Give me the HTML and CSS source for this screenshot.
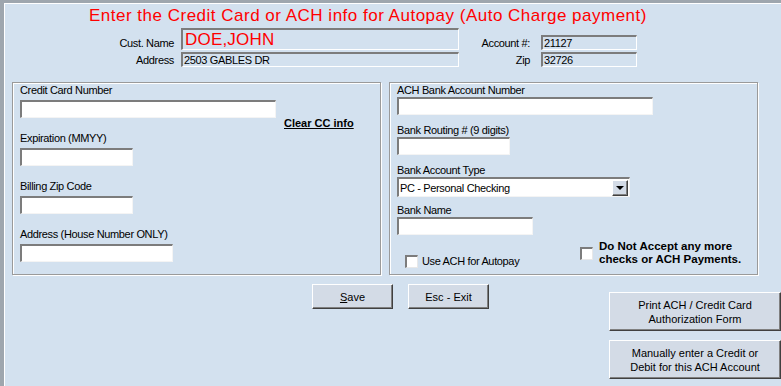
FILE: index.html
```html
<!DOCTYPE html>
<html lang="en">
<head>
    <meta charset="UTF-8">
    <title>Autopay Setup</title>
    <link rel="stylesheet" href="styles.css">
</head>
<body>
    <div class="window">
        <div class="face">
            <h1 class="title">Enter the Credit Card or ACH info for Autopay (Auto Charge payment)</h1>

            <!-- Customer info (read only) -->
            <div class="cust">
                <span class="cust-label">Cust. Name</span>
                <div class="ro ro-name">DOE,JOHN</div>
                <span class="cust-label acct-label">Account #:</span>
                <div class="ro ro-acct">21127</div>
                <span class="cust-label">Address</span>
                <div class="ro">2503 GABLES DR</div>
                <span class="cust-label acct-label">Zip</span>
                <div class="ro">32726</div>
            </div>

            <div class="groups">
                <!-- Credit card -->
                <div class="group group-cc">
                    <div class="cc-row">
                        <div class="field">
                            <label for="cc-num">Credit Card Number</label>
                            <input type="text" id="cc-num" class="in w256">
                        </div>
                        <a href="#" class="clear-link">Clear CC info</a>
                    </div>
                    <div class="field">
                        <label for="cc-exp">Expiration (MMYY)</label>
                        <input type="text" id="cc-exp" class="in w112">
                    </div>
                    <div class="field">
                        <label for="cc-zip">Billing Zip Code</label>
                        <input type="text" id="cc-zip" class="in w112">
                    </div>
                    <div class="field">
                        <label for="cc-addr">Address (House Number ONLY)</label>
                        <input type="text" id="cc-addr" class="in w152">
                    </div>
                </div>

                <!-- ACH -->
                <div class="group group-ach">
                    <div class="field">
                        <label for="ach-num">ACH Bank Account Number</label>
                        <input type="text" id="ach-num" class="in w256">
                    </div>
                    <div class="field">
                        <label for="ach-route">Bank Routing # (9 digits)</label>
                        <input type="text" id="ach-route" class="in w112">
                    </div>
                    <div class="field field-combo">
                        <label>Bank Account Type</label>
                        <div class="combo">
                            <span class="combo-text">PC - Personal Checking</span>
                            <span class="combo-btn"></span>
                        </div>
                    </div>
                    <div class="field field-last">
                        <label for="ach-bank">Bank Name</label>
                        <input type="text" id="ach-bank" class="in w136">
                    </div>
                    <div class="check-row">
                        <label class="check check-autopay">
                            <input type="checkbox" class="box">
                            <span>Use ACH for Autopay</span>
                        </label>
                        <label class="check check-block">
                            <input type="checkbox" class="box">
                            <span>Do Not Accept any more<br>checks or ACH Payments.</span>
                        </label>
                    </div>
                </div>
            </div>

            <div class="bottom">
                <div class="actions">
                    <button class="btn"><u>S</u>ave</button>
                    <button class="btn">Esc - Exit</button>
                </div>
                <div class="side">
                    <button class="btn btn-side">Print ACH / Credit Card<br>Authorization Form</button>
                    <button class="btn btn-side">Manually enter a Credit or<br>Debit for this ACH Account</button>
                </div>
            </div>
        </div>
    </div>
</body>
</html>
```

FILE: styles.css
```css
body {
    margin: 0;
    background-color: #d3e1ef;
    font-family: 'Liberation Sans', Arial, sans-serif;
    font-size: 11px;
    letter-spacing: -0.35px;
    color: #000;
    overflow: hidden;
}
.window {
    border-top: 3px solid #9ea6ae;
    border-left: 4px solid #9ea6ae;
    height: 383px;
}
.face {
    border-top: 1px solid #fff;
    border-left: 1px solid #fff;
    height: 382px;
}
.title {
    margin: 2px 0 0;
    padding-left: 84px;
    font-size: 17px;
    font-weight: normal;
    line-height: 20px;
    letter-spacing: 0.5px;
    color: #ff0000;
}

/* customer header */
.cust {
    display: grid;
    grid-template-columns: 176px 278px 82px 96px;
    grid-template-rows: 22px 15px;
    row-gap: 2px;
    margin-top: 2px;
}
.cust-label {
    align-self: end;
    text-align: right;
    padding-right: 7px;
    line-height: 13px;
}
.acct-label {
    padding-right: 11px;
}
.ro {
    box-sizing: border-box;
    border-top: 2px solid #7c7c7c;
    border-left: 2px solid #7c7c7c;
    border-right: 1px solid #fff;
    border-bottom: 1px solid #fff;
    padding-left: 1px;
    line-height: 12px;
    white-space: nowrap;
}
.ro-name {
    font-size: 17px;
    line-height: 19px;
    letter-spacing: 0.2px;
    color: #ff0000;
    padding-left: 2px;
}
.ro-acct {
    align-self: end;
    height: 15px;
}

/* group boxes */
.groups {
    display: flex;
    gap: 8px;
    margin-top: 15px;
    padding-left: 7px;
}
.group {
    box-sizing: border-box;
    width: 369px;
    height: 193px;
    border: 1px solid #9a9a9a;
    box-shadow: inset 1px 1px #fff, 1px 1px #fff;
    padding: 1px 0 0 7px;
}
.field label {
    display: block;
    line-height: 13px;
}
.in {
    display: block;
    box-sizing: border-box;
    height: 18px;
    margin: 0;
    padding: 0 2px;
    border-top: 2px solid #7c7c7c;
    border-left: 2px solid #7c7c7c;
    border-right: 1px solid #f4f4f4;
    border-bottom: 1px solid #f4f4f4;
    background: #fff;
    font: inherit;
    outline: none;
}
.w256 { width: 256px; }
.w152 { width: 153px; }
.w136 { width: 136px; }
.w112 { width: 113px; }

.group-cc .field {
    margin-bottom: 14px;
}
.group-cc .field label {
    margin-bottom: 3px;
}
.cc-row {
    display: flex;
    align-items: flex-end;
    margin-bottom: 14px;
}
.cc-row .field {
    margin-bottom: 0;
}
.clear-link {
    margin-left: 8px;
    margin-bottom: -12px;
    line-height: 13px;
    font-weight: bold;
    letter-spacing: 0;
    color: #000;
    text-decoration: underline;
}

.group-ach .field {
    margin-bottom: 9px;
}
.group-ach .field-combo {
    margin-bottom: 7px;
}
.group-ach .field-last {
    margin-bottom: 5px;
}
.combo {
    box-sizing: border-box;
    display: flex;
    align-items: center;
    width: 233px;
    height: 20px;
    border-top: 2px solid #7c7c7c;
    border-left: 2px solid #7c7c7c;
    border-right: 1px solid #f4f4f4;
    border-bottom: 1px solid #f4f4f4;
    background: #fff;
}
.combo-text {
    flex: 1;
    padding-left: 1px;
}
.combo-btn {
    box-sizing: border-box;
    width: 16px;
    height: 16px;
    margin-right: 1px;
    background: #d3dbe6;
    border: 1px solid;
    border-color: #fff #404040 #404040 #fff;
    box-shadow: inset -1px -1px #808080;
    position: relative;
}
.combo-btn::after {
    content: "";
    position: absolute;
    left: 3px;
    top: 5px;
    border-left: 4px solid transparent;
    border-right: 4px solid transparent;
    border-top: 4px solid #000;
}

.check-row {
    display: flex;
    align-items: flex-start;
    padding-left: 8px;
}
.check {
    display: flex;
    align-items: center;
    line-height: 13px;
}
.check-autopay {
    width: 175px;
    margin-top: 15px;
}
.check-block span {
    font-weight: bold;
    font-size: 11.5px;
    letter-spacing: 0;
}
.box {
    appearance: none;
    box-sizing: border-box;
    width: 13px;
    height: 13px;
    margin: 0 4px 0 0;
    background: #fff;
    border-top: 2px solid #7c7c7c;
    border-left: 2px solid #7c7c7c;
    border-right: 1px solid #e8e8e8;
    border-bottom: 1px solid #e8e8e8;
}
.check-block .box {
    margin-right: 6px;
}

/* buttons */
.bottom {
    display: flex;
    margin-top: 9px;
}
.actions {
    display: flex;
    align-items: flex-start;
    gap: 15px;
    width: 607px;
    box-sizing: border-box;
    padding-left: 307px;
}
.btn {
    box-sizing: border-box;
    width: 81px;
    height: 25px;
    padding: 0;
    background: #d3dbe6;
    border: 1px solid;
    border-color: #fff #404040 #404040 #fff;
    box-shadow: inset -1px -1px #808080;
    font: inherit;
    color: #000;
    line-height: 14px;
}
.side {
    display: flex;
    flex-direction: column;
    gap: 9px;
    margin-top: 8px;
}
.btn-side {
    width: 172px;
    height: 39px;
}
```
